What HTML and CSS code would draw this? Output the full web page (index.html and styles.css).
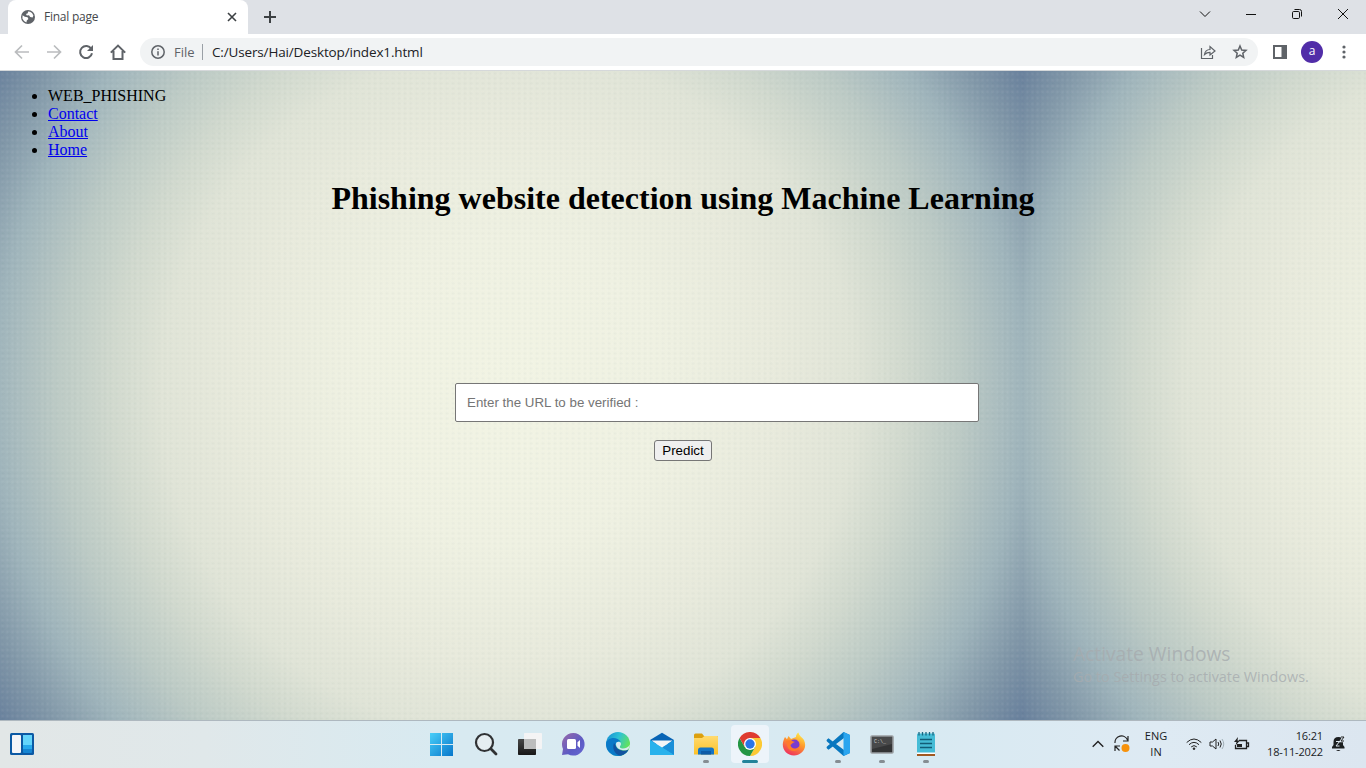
FILE: index.html
```html
<!DOCTYPE html>
<html lang="en">
<head>
<meta charset="utf-8">
<title>Final page</title>
<link rel="stylesheet" href="styles.css">
</head>
<body>
<div class="tabstrip">
  <div class="tab">
    <svg class="globe" width="14" height="14" viewBox="0 0 14 14"><circle cx="7" cy="7" r="7" fill="#5f6368"/><path d="M1.6 5.2 3.8 6.8 6.6 7.3 7.4 9 5.8 10.4 5.4 12.4 3 11 1.4 8.6ZM7 1.4 6.8 3.2 5 4 5.8 5.4 8 5.2 9.2 7 11.6 7.6 12.4 5.4 11 3 9 1.8Z" fill="#fff"/></svg>
    <span class="tab-title">Final page</span>
    <svg width="10" height="10" viewBox="0 0 10 10" stroke="#3c4043" stroke-width="1.6"><path d="M1 1 9 9M9 1 1 9"/></svg>
  </div>
  <svg class="plus" width="12" height="12" viewBox="0 0 12 12" stroke="#3c4043" stroke-width="2"><path d="M6 0V12M0 6H12"/></svg>
  <div class="window-controls">
    <svg width="12" height="12" viewBox="0 0 12 12"><path d="M1 3.5 6 8.5 11 3.5"/></svg>
    <svg width="12" height="12" viewBox="0 0 12 12"><path d="M1 6.5H11"/></svg>
    <svg width="12" height="12" viewBox="0 0 12 12"><rect x="1.5" y="3.5" width="7" height="7" rx="1.2"/><path d="M3.5 1.5H8.5A2 2 0 0 1 10.500 3.500V8.500"/></svg>
    <svg width="12" height="12" viewBox="0 0 12 12"><path d="M1 1 11 11M11 1 1 11"/></svg>
  </div>
</div>
<div class="toolbar">
  <div class="nav">
    <svg class="off" width="16" height="16" viewBox="0 0 16 16"><path d="M15 8H2M8 1.500 1.500 8 8 14.500"/></svg>
    <svg class="off" width="16" height="16" viewBox="0 0 16 16"><path d="M1 8H14M8 1.500 14.500 8 8 14.500"/></svg>
    <svg width="16" height="16" viewBox="0 0 16 16"><path d="M13.300 5A6 6 0 1 0 14 9.300"/><path d="M15 1V7H9Z" fill="#5f6368" stroke="none"/></svg>
    <svg width="16" height="16" viewBox="0 0 16 16"><path d="M.8 8.600 8 1.600 15.200 8.600M3.500 7V15H12.500V7"/></svg>
  </div>
  <div class="omnibox">
    <svg width="14" height="14" viewBox="0 0 14 14" fill="none" stroke="#5f6368" stroke-width="1.500"><circle cx="7" cy="7" r="6.200"/><path d="M7 6.200V10.500M7 3.500V5"/></svg>
    <span class="scheme">File</span><span class="divider"></span><span class="url">C:/Users/Hai/Desktop/index1.html</span>
    <svg class="share" width="16" height="16" viewBox="0 0 16 16" fill="none" stroke="#5f6368" stroke-width="1.200"><path d="M1.500 4V14.500H12.500V11"/><path d="M4.500 10.500C5 7 7 5.600 10 5.500V2.500L15 7 10 11V8.300C7.500 8.300 6 9 4.500 10.500Z"/></svg>
    <svg width="16" height="16" viewBox="0 0 16 16" fill="none" stroke="#5f6368" stroke-width="1.500"><path d="M8 2 9.700 6 14 6.400 10.800 9.200 11.700 13.400 8 11.200 4.300 13.400 5.200 9.200 2 6.400 6.300 6Z"/></svg>
  </div>
  <svg class="panel-icon" width="14" height="14" viewBox="0 0 14 14"><path d="M0 0H14V14H0ZM2 2V12H8.500V2Z" fill="#5f6368" fill-rule="evenodd"/></svg>
  <span class="avatar">a</span>
  <svg class="menu" width="4" height="14" viewBox="0 0 4 14" fill="#5f6368"><circle cx="2" cy="2" r="1.600"/><circle cx="2" cy="7" r="1.600"/><circle cx="2" cy="12" r="1.600"/></svg>
</div>
<main class="page">
  <ul class="links">
    <li>WEB_PHISHING</li>
    <li><a href="#">Contact</a></li>
    <li><a href="#">About</a></li>
    <li><a href="#">Home</a></li>
  </ul>
  <h1>Phishing website detection using Machine Learning</h1>
  <form class="form">
    <input class="url-input" type="text" placeholder="Enter the URL to be verified :">
    <button class="predict" type="button">Predict</button>
  </form>
  <div class="watermark"><div class="wm-title">Activate Windows</div><div class="wm-text">Go to Settings to activate Windows.</div></div>
</main>
<footer class="taskbar">
  <svg class="widgets" width="24" height="22" viewBox="0 0 24 22"><rect width="24" height="22" rx="1.500" fill="#0c59a4"/><rect x="2" y="2" width="9" height="18" rx="1" fill="#f5f5f8"/><rect x="13" y="2" width="9" height="18" rx="1" fill="#1685d3"/><path d="M13 2H22V12H13Z" fill="#64d5fb"/><path d="M13 12H22V16H13Z" fill="#27a9ec"/></svg>
  <div class="apps">
    <div class="app"><svg width="24" height="24" viewBox="0 0 24 24"><defs><linearGradient id="win" x1="0" y1="0" x2="24" y2="24" gradientUnits="userSpaceOnUse"><stop stop-color="#4bd1fa"/><stop offset="1" stop-color="#0675ca"/></linearGradient></defs><path d="M0 1H11V12H0ZM12 1H23V12H12ZM0 13H11V24H0ZM12 13H23V24H12Z" fill="url(#win)"/></svg></div>
    <div class="app"><svg width="24" height="24" viewBox="0 0 24 24"><circle cx="10.500" cy="10.500" r="8.500" fill="#e6eef1" stroke="#303234" stroke-width="2.200"/><path d="M16.800 16.800 22 22" stroke="#303234" stroke-width="2.800" stroke-linecap="round"/></svg></div>
    <div class="app"><svg width="24" height="24" viewBox="0 0 24 24"><defs><linearGradient id="tv" x2="0" y2="1"><stop stop-color="#484848"/><stop offset="1" stop-color="#171717"/></linearGradient></defs><rect y="7" width="18" height="16" rx=".8" fill="url(#tv)"/><rect x="6" y="1" width="18" height="16" rx=".8" fill="#f4f4f5"/><path d="M6 7H18V17H6Z" fill="#bcbdbd"/></svg></div>
    <div class="app"><svg width="24" height="24" viewBox="0 0 24 24"><defs><linearGradient id="chat" x2="1" y2="1"><stop stop-color="#9a6aa9"/><stop offset=".6" stop-color="#5c5bc5"/><stop offset="1" stop-color="#6667d2"/></linearGradient></defs><path d="M11.500 1A11.300 11.300 0 1 1 6 22.300L0 23 1 17A11.300 11.300 0 0 1 11.500 1Z" fill="url(#chat)"/><rect x="5" y="7" width="9" height="10" rx="1.500" fill="#fff"/><path d="M15.500 10.200 18 8V16L15.500 13.800Z" fill="#fff"/></svg></div>
    <div class="app"><svg width="24" height="24" viewBox="0 0 24 24"><defs><linearGradient id="edge" x2="1" y2=".5"><stop stop-color="#1589d4"/><stop offset=".5" stop-color="#2ec2d5"/><stop offset="1" stop-color="#66e553"/></linearGradient></defs><circle cx="12" cy="12" r="12" fill="url(#edge)"/><path d="M0 12C1 5 11 4 15 10C10 8 8 14 10 17C12 21 19 21 22.500 18C20 22 16 24 12 24A12 12 0 0 1 0 12Z" fill="#0b79c8"/><path d="M8 11C5 19 12 24 15 23.600C19 22.500 21.500 19.500 22.500 17.500C18 20 11 18 10 14Z" fill="#1253a0"/><path d="M10 12C10 9 15 9 15 12C15 13.500 13.500 14 14 15.500C16 17.500 22 16.500 24 12.500C23.500 15.500 22.500 17.500 21 18C16 19 10 17 10 12Z" fill="#d9eaf1"/></svg></div>
    <div class="app"><svg width="24" height="24" viewBox="0 0 24 24"><path d="M0 8 12 .8 24 8V12H0Z" fill="#0864b5"/><path d="M0 8 12 16 24 8V23H0Z" fill="#29b2ec"/><path d="M1.500 8.500H22.500L12 16Z" fill="#f4f5f7"/><path d="M12 15.500 24 8V23Z" fill="#1a8fd8"/><path d="M10 14.300 24 23H0V8Z" fill="#29b2ec"/></svg></div>
    <div class="app running"><svg width="24" height="24" viewBox="0 0 24 24"><defs><linearGradient id="fold" x2="0" y2="1"><stop stop-color="#ffdb71"/><stop offset="1" stop-color="#fcc127"/></linearGradient></defs><path d="M0 3Q0 1.500 1.500 1.500H8L10 4H23Q24 4 24 5V22H0Z" fill="#dca00f"/><path d="M0 6H8L10.500 4H23Q24 4 24 5V22.500H0Z" fill="url(#fold)"/><path d="M4 22.500V18Q4 15.500 6.500 15.500H17.500Q20 15.500 20 18V22.500Z" fill="#1475c5"/><path d="M7 19H17V22.500H7Z" fill="#0d5ca8"/></svg></div>
    <div class="app active"><svg width="24" height="24" viewBox="0 0 24 24"><path d="M22.400 6A12 12 0 0 1 12 24L17.200 15 12 6Z" fill="#fcc934"/><path d="M1.600 6A12 12 0 0 0 12 24L17.200 15 6.800 15Z" fill="#249644"/><path d="M1.600 6A12 12 0 0 1 22.400 6H12L6.800 15Z" fill="#df3b30"/><circle cx="12" cy="12" r="6" fill="#fff"/><circle cx="12" cy="12" r="4.700" fill="#2875e8"/></svg></div>
    <div class="app"><svg width="24" height="24" viewBox="0 0 24 24"><defs><linearGradient id="fox" x1=".8" y1="0" x2=".3" y2="1"><stop stop-color="#fff04b"/><stop offset=".45" stop-color="#ff982c"/><stop offset="1" stop-color="#ee2e60"/></linearGradient></defs><path d="M14 5C14 3 15 1.500 16.500 .5C17 4 20 5 22 8C26 17 19 23.500 12 23.500C5 23.500 .5 18 .8 12C1 9 2 7 3 5L5 7.200 6.500 4 9 7Z" fill="url(#fox)"/><circle cx="12.500" cy="12.500" r="5" fill="#7a3bd0"/><path d="M4 9C8 7 10 9 13 10C10 11 10 12 8.500 13C9 17 14 18 17.500 14C17 20 8 21 5.500 15Z" fill="#ff7a2b"/></svg></div>
    <div class="app running"><svg width="24" height="24" viewBox="0 0 24 24"><path d="M17.500 0 24 3V21L17.500 24 1 9.500Q0 8.500 1 7.500L2.500 6.200 18 18V6L2.500 17.800 1 16.500Q0 15.500 1 14.500Z" fill="#0877bf"/><path d="M17.500 0 24 3V21L17.500 24Z" fill="#2aa5ef"/></svg></div>
    <div class="app running"><svg width="24" height="24" viewBox="0 0 24 24"><rect x="1" y="4" width="22" height="17" rx="1" fill="#333435" stroke="#9b9fa2" stroke-width="1.600"/><path d="M2 5H22V12L2 17Z" fill="#48494a"/><text x="4" y="10.500" class="cmd">C:\_</text></svg></div>
    <div class="app running"><svg width="24" height="24" viewBox="0 0 24 24"><rect x="3" y="1.500" width="18" height="20" rx="1" fill="#45bcd6"/><path d="M6 7.500H18M6 11.500H18M6 15.500H18" stroke="#125d77" stroke-width="1.500"/><path d="M5 0V3.500M8.500 0V3.500M12 0V3.500M15.500 0V3.500M19 0V3.500" stroke="#176782" stroke-width="1.300"/><path d="M3 20.500H21V22H3Z" fill="#fff"/><path d="M3 22H21V24H3Z" fill="#a15922"/></svg></div>
  </div>
  <div class="tray">
    <svg width="12" height="8" viewBox="0 0 12 8"><path d="M.7 6.800 6 1.500 11.300 6.800" stroke-width="1.400"/></svg>
    <svg class="sync" width="18" height="18" viewBox="0 0 18 18"><path d="M2 8A6.500 6.500 0 0 1 14.500 5M15 1V6H10M2 16V11H7M2.500 11.500 6.500 15.500" stroke-width="1.200"/><circle cx="12.500" cy="13" r="4" fill="#f7920b" stroke="none"/></svg>
    <div class="lang">ENG<br>IN</div>
    <svg class="wifi" width="16" height="14" viewBox="0 0 16 14"><path d="M.7 5.500Q8-1.500 15.300 5.500M3 7.700Q8 3 13 7.700M5.200 9.900Q8 7.300 10.800 9.900"/><circle cx="8" cy="11.700" r="1" fill="#222" stroke-width=".5"/></svg>
    <svg class="volume" width="16" height="14" viewBox="0 0 16 14"><path d="M1 5H3.500L7 2V12L3.500 9H1ZM9 5Q10.500 7 9 9M11 3.500Q13.500 7 11 10.500"/><path d="M13 2Q16.500 7 13 12" stroke="#a2b0b8"/></svg>
    <svg class="battery" width="18" height="14" viewBox="0 0 18 14"><path d="M6 3.500H13.500V11.500H2.500V8M14 6H15.500V9.500H14" stroke-width="1.300"/><path d="M4 7H9V10H4ZM5 0 1 5H3.500L2.500 8.500 7 3.500H4.500Z" fill="#222" stroke="none"/></svg>
    <div class="clock">16:21<br>18-11-2022</div>
    <svg class="bell" width="15" height="16" viewBox="0 0 15 16"><path d="M1 12.500V11L2.500 9V6Q2.500 1 7.500 1Q12 1 12 6V9L13.500 11V12.500ZM5 14H9.500Q7.500 16 5 14Z" fill="#1c1f21" stroke="none"/><path d="M5 5.500H8.500L5 10H8.500" stroke="#dfe9f2" stroke-width="1"/><path d="M10 1H13L10 5H13" stroke="#dfe9f2" stroke-width="2.500"/><path d="M10 1H13L10 5H13"/></svg>
  </div>
</footer>
</body>
</html>
```
FILE: styles.css
```css
* { box-sizing: border-box; }
body {
  margin: 0;
  width: 1366px;
  height: 768px;
  overflow: hidden;
  display: flex;
  flex-direction: column;
  font-family: "Open Sans", "Noto Sans", sans-serif;
}
svg { display: block; flex: none; }
.tabstrip {
  height: 34px;
  flex: none;
  display: flex;
  background: #dee1e6;
  padding-left: 8px;
}
.tab {
  width: 240px;
  height: 34px;
  display: flex;
  align-items: center;
  padding: 0 11px 0 13px;
  background: #fff;
  border-radius: 8px 8px 0 0;
  font-size: 12px;
  letter-spacing: -.25px;
  color: #45484b;
}
.tab-title { flex: 1; margin-left: 9px; padding-bottom: 2px; }
.plus { margin: 11px 0 0 16px; }
.window-controls {
  display: flex;
  gap: 34px;
  margin: 8px 17px 0 auto;
  fill: none;
  stroke: #111;
}
.toolbar {
  height: 37px;
  flex: none;
  display: flex;
  align-items: center;
  padding: 0 20px 1px 14px;
  background: #fff;
  border-bottom: 1px solid #d5d8da;
}
.nav {
  display: flex;
  gap: 16px;
  fill: none;
  stroke: #5f6368;
  stroke-width: 2;
}
.off { stroke: #babcbe; stroke-width: 1.7; }
.omnibox {
  width: 1118px;
  height: 28px;
  margin-left: 14px;
  padding: 0 10px 0 11px;
  border-radius: 14px;
  background: #f1f3f4;
  display: flex;
  align-items: center;
  font-size: 13.5px;
}
.scheme { margin-left: 9px; color: #5f6368; font-size: 13px; width: 21px; }
.divider { width: 1px; height: 16px; margin: 0 9px 0 7px; background: #9aa0a6; }
.url { color: #202124; letter-spacing: -.15px; }
.share { margin: 0 16px 0 auto; }
.panel-icon { margin-left: 15px; }
.avatar {
  width: 22px;
  height: 22px;
  margin: 0 19px 0 14px;
  border-radius: 50%;
  background: #512da8;
  color: #fff;
  font-size: 12px;
  line-height: 20px;
  text-align: center;
}
.page {
  position: relative;
  height: 649px;
  flex: none;
  overflow: hidden;
  padding: 16px 8px 0;
  font-family: "Liberation Serif", serif;
  font-size: 16px;
  background-image:
    radial-gradient(circle at 50% 50%, rgba(255,255,255,.07), rgba(255,255,255,0) 60%),
    radial-gradient(circle at 50% 50%, rgba(50,90,90,.04), rgba(50,90,90,0) 60%),
    radial-gradient(620px 610px at 509px 322px, #f2f4e4 0, #eff1e2 25%, #e8eadc 44%, #e0e4d7 56%, #d1d9ce 64%, #bccac5 73%, #9fb4bb 83%, #8197a8 91%, #667e9b 99%, #60789a 103%);
  background-size: 5px 6px, 6px 5px, 1024px 649px;
}
.links { margin: 0; padding-left: 40px; line-height: 18px; }
.links a { color: #00e; }
h1 {
  margin: 21px 0 0;
  font-size: 32px;
  line-height: 37px;
  text-align: center;
}
.form {
  display: flex;
  flex-direction: column;
  align-items: center;
  padding-top: 166px;
}
.url-input {
  width: 524px;
  height: 39px;
  margin-left: 68px;
  padding: 1px 11px;
  border: 1px solid #767676;
  border-radius: 2px;
  font: 13.333px "Liberation Sans", sans-serif;
}
.url-input::placeholder { color: #757575; }
.predict {
  width: 58px;
  height: 21px;
  margin-top: 18px;
  padding: 0;
  border: 1px solid #767676;
  border-radius: 3px;
  background: #efefef;
  color: #000;
  font: 13.333px/19px "Liberation Sans", sans-serif;
}
.watermark {
  position: absolute;
  left: 1073px;
  top: 569px;
  color: rgba(166,171,174,.8);
  font-family: "Open Sans", sans-serif;
  white-space: nowrap;
}
.wm-title { font-size: 19.2px; line-height: 27px; }
.wm-text { font-size: 14.4px; line-height: 19px; }
.taskbar {
  height: 48px;
  flex: none;
  display: flex;
  position: relative;
  border-top: 1px solid #aeb8bf;
  background: linear-gradient(90deg, #e2e7e7 0, #e0e8ea 15%, #d8eaf1 32%, #d8eaf2 68%, #deeaf3 85%, #dce6f0 100%);
}
.widgets { margin: 12px 0 0 10px; }
.apps { display: flex; gap: 6px; margin: 4px 0 0 389px; }
.app {
  width: 38px;
  height: 38px;
  display: flex;
  flex-direction: column;
  align-items: center;
  padding-top: 7px;
  border-radius: 4px;
}
.running::after, .active::after {
  content: "";
  width: 6px;
  height: 3px;
  margin-top: 4px;
  border-radius: 2px;
  background: #858d92;
}
.active { background: #edf4fa; }
.active::after { width: 16px; background: #21839a; }
.cmd { font: 5px "Liberation Mono", monospace; fill: #d0d0d0; }
.tray {
  margin-left: auto;
  padding: 0 20px 2px 0;
  display: flex;
  align-items: center;
  fill: none;
  stroke: #222;
  color: #191c1e;
  font-size: 11px;
  line-height: 16px;
}
.sync { margin-left: 9px; }
.lang { width: 32px; margin-left: 9px; text-align: center; }
.wifi { margin-left: 14px; }
.volume { margin-left: 7px; }
.battery { margin-left: 8px; }
.clock { width: 65px; margin-left: 7px; text-align: right; white-space: nowrap; letter-spacing: -.15px; }
.bell { margin-left: 8px; }
```
